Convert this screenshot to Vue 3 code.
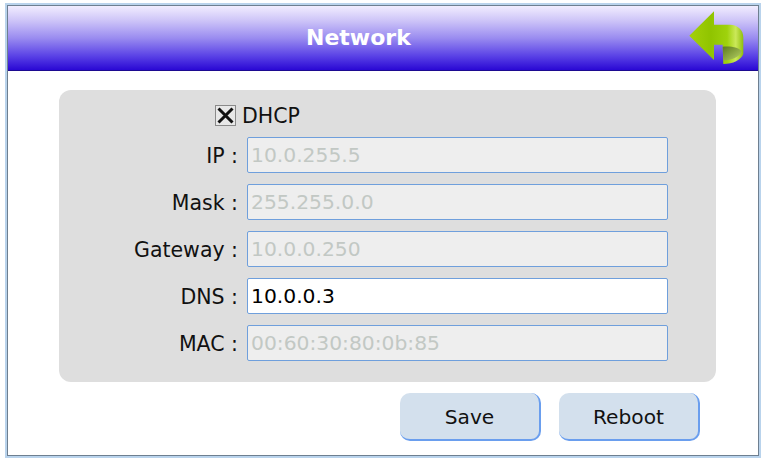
<template>
  <div class="frame">
    <div class="window">
      <header class="titlebar">
        <h1>Network</h1>
        <button class="back" aria-label="Back">
          <svg width="58" height="56" viewBox="0 0 58 56">
            <defs>
              <linearGradient id="arrowFill" x1="0" x2="1" y1="0" y2="0">
                <stop offset="0" stop-color="#a4d00a" />
                <stop offset="0.4" stop-color="#90c400" />
                <stop offset="0.7" stop-color="#9fd20c" />
                <stop offset="0.86" stop-color="#cbe85a" />
                <stop offset="1" stop-color="#8fbf0c" />
              </linearGradient>
              <linearGradient id="arrowInner" x1="0" x2="1" y1="0" y2="1">
                <stop offset="0" stop-color="#5d7a1c" />
                <stop offset="1" stop-color="#b9d468" />
              </linearGradient>
              <filter id="soft"><feGaussianBlur stdDeviation="0.8" /></filter>
            </defs>
            <path d="M0.5 13 V36" stroke="#3d3a80" stroke-width="2" opacity="0.35" filter="url(#soft)" />
            <path d="M1.3 25.7 L26 1.3 L26 14.7 L42 14.7 C50 15 55.3 20 55.3 27.3 L55.3 44 C53 50 45 54 35.3 54 L34.7 34.7 L26 34.7 L26 50 Z" fill="url(#arrowFill)" />
            <path d="M34.7 36.7 C42 36 52 37 53.7 42.3 C51 47 44 50 35.3 50.7 Z" fill="url(#arrowInner)" />
          </svg>
        </button>
      </header>

      <main class="content">
        <section class="panel">
          <label class="dhcp">
            <span class="checkbox">
              <svg width="17" height="17" viewBox="0 0 17 17">
                <path d="M1.5 1.5 L15.5 15.5 M15.5 1.5 L1.5 15.5" stroke="#111" stroke-width="3" fill="none" />
              </svg>
            </span>
            <span class="dhcp-text">DHCP</span>
          </label>
          <div class="fields">
            <template v-for="f in fields" :key="f.label">
              <span class="label">{{ f.label }} :</span>
              <div class="input" :class="{ disabled: f.disabled }">{{ f.value }}</div>
            </template>
          </div>
        </section>
        <div class="actions">
          <button class="btn">Save</button>
          <button class="btn">Reboot</button>
        </div>
      </main>
    </div>
  </div>
</template>

<script setup>
const fields = [
  { label: 'IP', value: '10.0.255.5', disabled: true },
  { label: 'Mask', value: '255.255.0.0', disabled: true },
  { label: 'Gateway', value: '10.0.0.250', disabled: true },
  { label: 'DNS', value: '10.0.0.3', disabled: false },
  { label: 'MAC', value: '00:60:30:80:0b:85', disabled: true },
]
</script>

<style>
html, body { background: #fff; }
</style>

<style scoped>
.frame {
  width: 756px;
  height: 455px;
  margin: 3px 0 0 5px;
  box-sizing: border-box;
  border: 2px solid #b9d3ec;
  font-family: "DejaVu Sans", sans-serif;
  color: #111;
}

.window {
  height: 100%;
  box-sizing: border-box;
  border: 1px solid #6e7f90;
  background: #fff;
  display: flex;
  flex-direction: column;
}

.titlebar {
  height: 65px;
  flex: none;
  box-sizing: border-box;
  border-bottom: 1px solid #1c0a90;
  background: linear-gradient(#f1edff 0%, #cfc6f8 22%, #9a8cf0 50%, #5a42e6 78%, #2a08d4 100%);
  display: flex;
  align-items: center;
  padding-left: 298px;
  position: relative;
}

h1 {
  margin: 0 0 1px;
  font-size: 22px;
  font-weight: 700;
  color: #fff;
}

.back {
  position: absolute;
  right: 12px;
  top: 4px;
  padding: 0;
  border: 0;
  background: none;
  display: flex;
}

.content {
  flex: 1;
  padding: 19px 42px 0 51px;
}

.panel {
  height: 292px;
  box-sizing: border-box;
  background: #dedede;
  border-radius: 12px;
  padding: 13px 48px 0 0;
}

.dhcp {
  display: flex;
  align-items: center;
  gap: 6px;
  margin-left: 156px;
  height: 24px;
  font-size: 20.5px;
}

.dhcp-text {
  padding-top: 2px;
}

.checkbox {
  width: 21px;
  height: 21px;
  box-sizing: border-box;
  border: 1px solid #8a8a8a;
  background: #e8e8e8;
  display: flex;
  align-items: center;
  justify-content: center;
}

.fields {
  display: grid;
  grid-template-columns: 179px 421px;
  column-gap: 9px;
  row-gap: 11px;
  margin-top: 10px;
  align-items: center;
}

.label {
  padding-top: 2px;
  text-align: right;
  font-size: 20.5px;
  white-space: nowrap;
}

.input {
  height: 36px;
  box-sizing: border-box;
  border: 1px solid #6f9fdc;
  border-radius: 2px;
  background: #fff;
  padding-left: 3px;
  font-size: 20.3px;
  line-height: 35px;
  color: #000;
}

.input.disabled {
  background: #eeeeee;
  color: #c2c8c4;
}

.actions {
  display: flex;
  gap: 18px;
  margin: 11px 16px 0 0;
  justify-content: flex-end;
}

.btn {
  width: 141px;
  height: 48px;
  box-sizing: border-box;
  border: 0;
  border-right: 2px solid #6a9eee;
  border-bottom: 2px solid #6a9eee;
  border-radius: 10px;
  background: #d3e0ed;
  padding: 2px 0 0;
  font-family: inherit;
  font-size: 20.2px;
  color: #111;
}
</style>
